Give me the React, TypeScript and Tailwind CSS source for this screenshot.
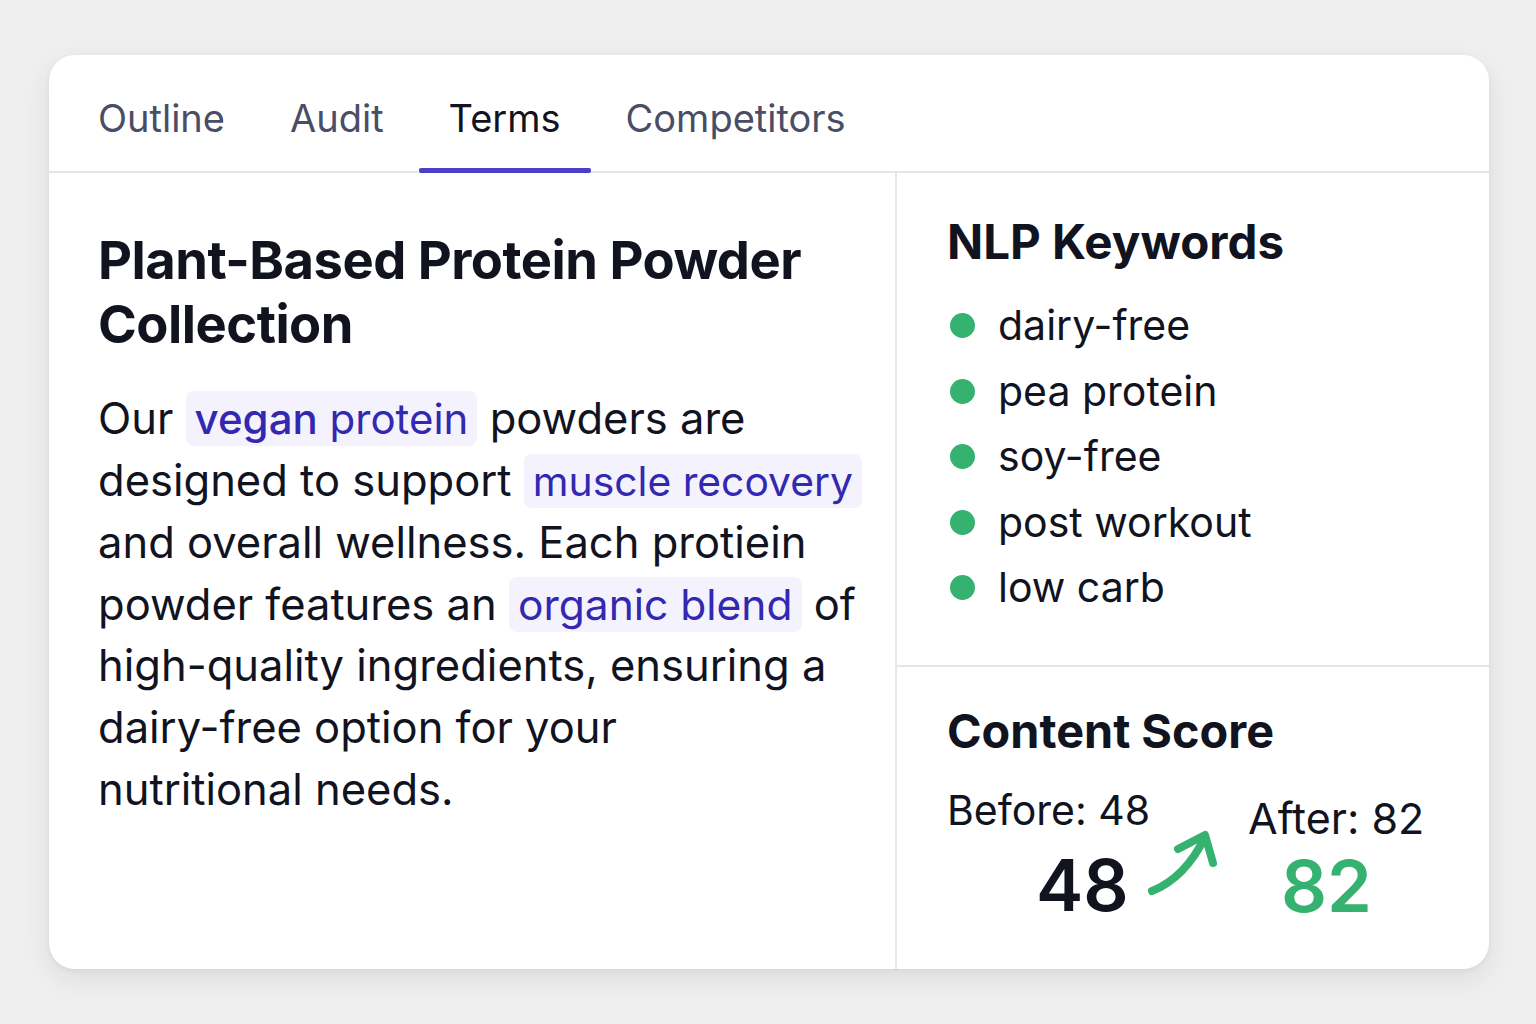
import React from "react";

const font = { fontFamily: "Inter, 'Noto Sans', sans-serif" };

function Highlight({ children, size }: { children: React.ReactNode; size: string }) {
  return (
    <span className={`rounded-[8px] bg-[#f3f2fd] px-[9px] py-[2px] text-[#3328b0] ${size}`}>
      {children}
    </span>
  );
}

export default function App() {
  const tabs = ["Outline", "Audit", "Terms", "Competitors"];
  const keywords = ["dairy-free", "pea protein", "soy-free", "post workout", "low carb"];
  return (
    <div className="min-h-screen w-full bg-[#efefef] pl-[49px] pt-[55px]" style={font}>
      <div className="flex h-[914px] w-[1440px] flex-col overflow-hidden rounded-[26px] bg-white shadow-[0_10px_30px_rgba(0,0,0,0.08),0_2px_6px_rgba(0,0,0,0.05)]">
        <div className="flex h-[118px] shrink-0 items-stretch gap-[5px] border-b-2 border-[#e6e6e9] pl-[19px]">
          {tabs.map((t) => {
            const active = t === "Terms";
            return (
              <div key={t} className="relative flex items-center px-[30px] pt-[10px]">
                <span className={`text-[38px] ${active ? "text-[#11131f]" : "text-[#4a4d66]"}`}>{t}</span>
                {active && <div className="absolute bottom-[-2px] left-0 right-0 h-[5px] rounded-[2px] bg-[#4a3fc6]" />}
              </div>
            );
          })}
        </div>
        <div className="flex flex-1">
          <div className="w-[848px] shrink-0 border-r-2 border-[#e6e6e9] pl-[49px] pr-[4px] pt-[55px] text-[#11131f]">
            <h1 className="text-[52.5px] font-bold leading-[64px] tracking-[-0.5px]">
              Plant-Based Protein Powder Collection
            </h1>
            <p className="mt-[32px] whitespace-nowrap text-[43.5px] leading-[61.6px]">
              Our{" "}
              <Highlight size="text-[42px]">
                <span className="font-medium">vegan</span> protein
              </Highlight>{" "}
              powders are
              <br />
              designed to support <Highlight size="text-[40.8px]">muscle recovery</Highlight>
              <br />
              and overall wellness. Each protiein
              <br />
              powder features an <Highlight size="text-[42.5px]">organic blend</Highlight> of
              <br />
              high-quality ingredients, ensuring a
              <br />
              dairy-free option for your
              <br />
              nutritional needs.
            </p>
          </div>
          <div className="flex flex-1 flex-col">
            <div className="border-b-2 border-[#e6e6e9] px-[50px] pb-[44px] pt-[43px]">
              <h2 className="text-[47.5px] font-bold leading-[52px] text-[#11131f]">NLP Keywords</h2>
              <ul className="mt-[25px]">
                {keywords.map((k) => (
                  <li key={k} className="flex h-[65.5px] items-center">
                    <span className="ml-[3px] h-[25px] w-[25px] rounded-full bg-[#35b26f]" />
                    <span className="ml-[23px] text-[41px] text-[#11131f]">{k}</span>
                  </li>
                ))}
              </ul>
            </div>
            <div className="px-[50px] pt-[38px] text-[#11131f]">
              <h2 className="text-[46.8px] font-bold leading-[52px]">Content Score</h2>
              <div className="mt-[29px] flex">
                <div className="flex w-[301px] flex-col">
                  <span className="text-[41px] leading-[48px]">Before: 48</span>
                  <div className="flex items-start">
                    <span className="ml-[89px] mt-[9px] text-[71px] font-semibold leading-[84px]">48</span>
                    <svg width="76" height="76" viewBox="0 0 76 76" className="ml-[16px] mt-[-8px]" fill="none">
                      <path d="M7 65 Q 40 52, 60 11" stroke="#35b26f" strokeWidth="8" strokeLinecap="round" />
                      <path d="M33 23 L 60 9 L 68 37" stroke="#35b26f" strokeWidth="8" strokeLinecap="round" strokeLinejoin="round" />
                    </svg>
                  </div>
                </div>
                <div className="mt-[8px] flex flex-col">
                  <span className="text-[43px] leading-[48px]">After: 82</span>
                  <span className="ml-[33px] mt-[2px] text-[72px] font-semibold leading-[84px] text-[#35b26f]">82</span>
                </div>
              </div>
            </div>
          </div>
        </div>
      </div>
    </div>
  );
}
